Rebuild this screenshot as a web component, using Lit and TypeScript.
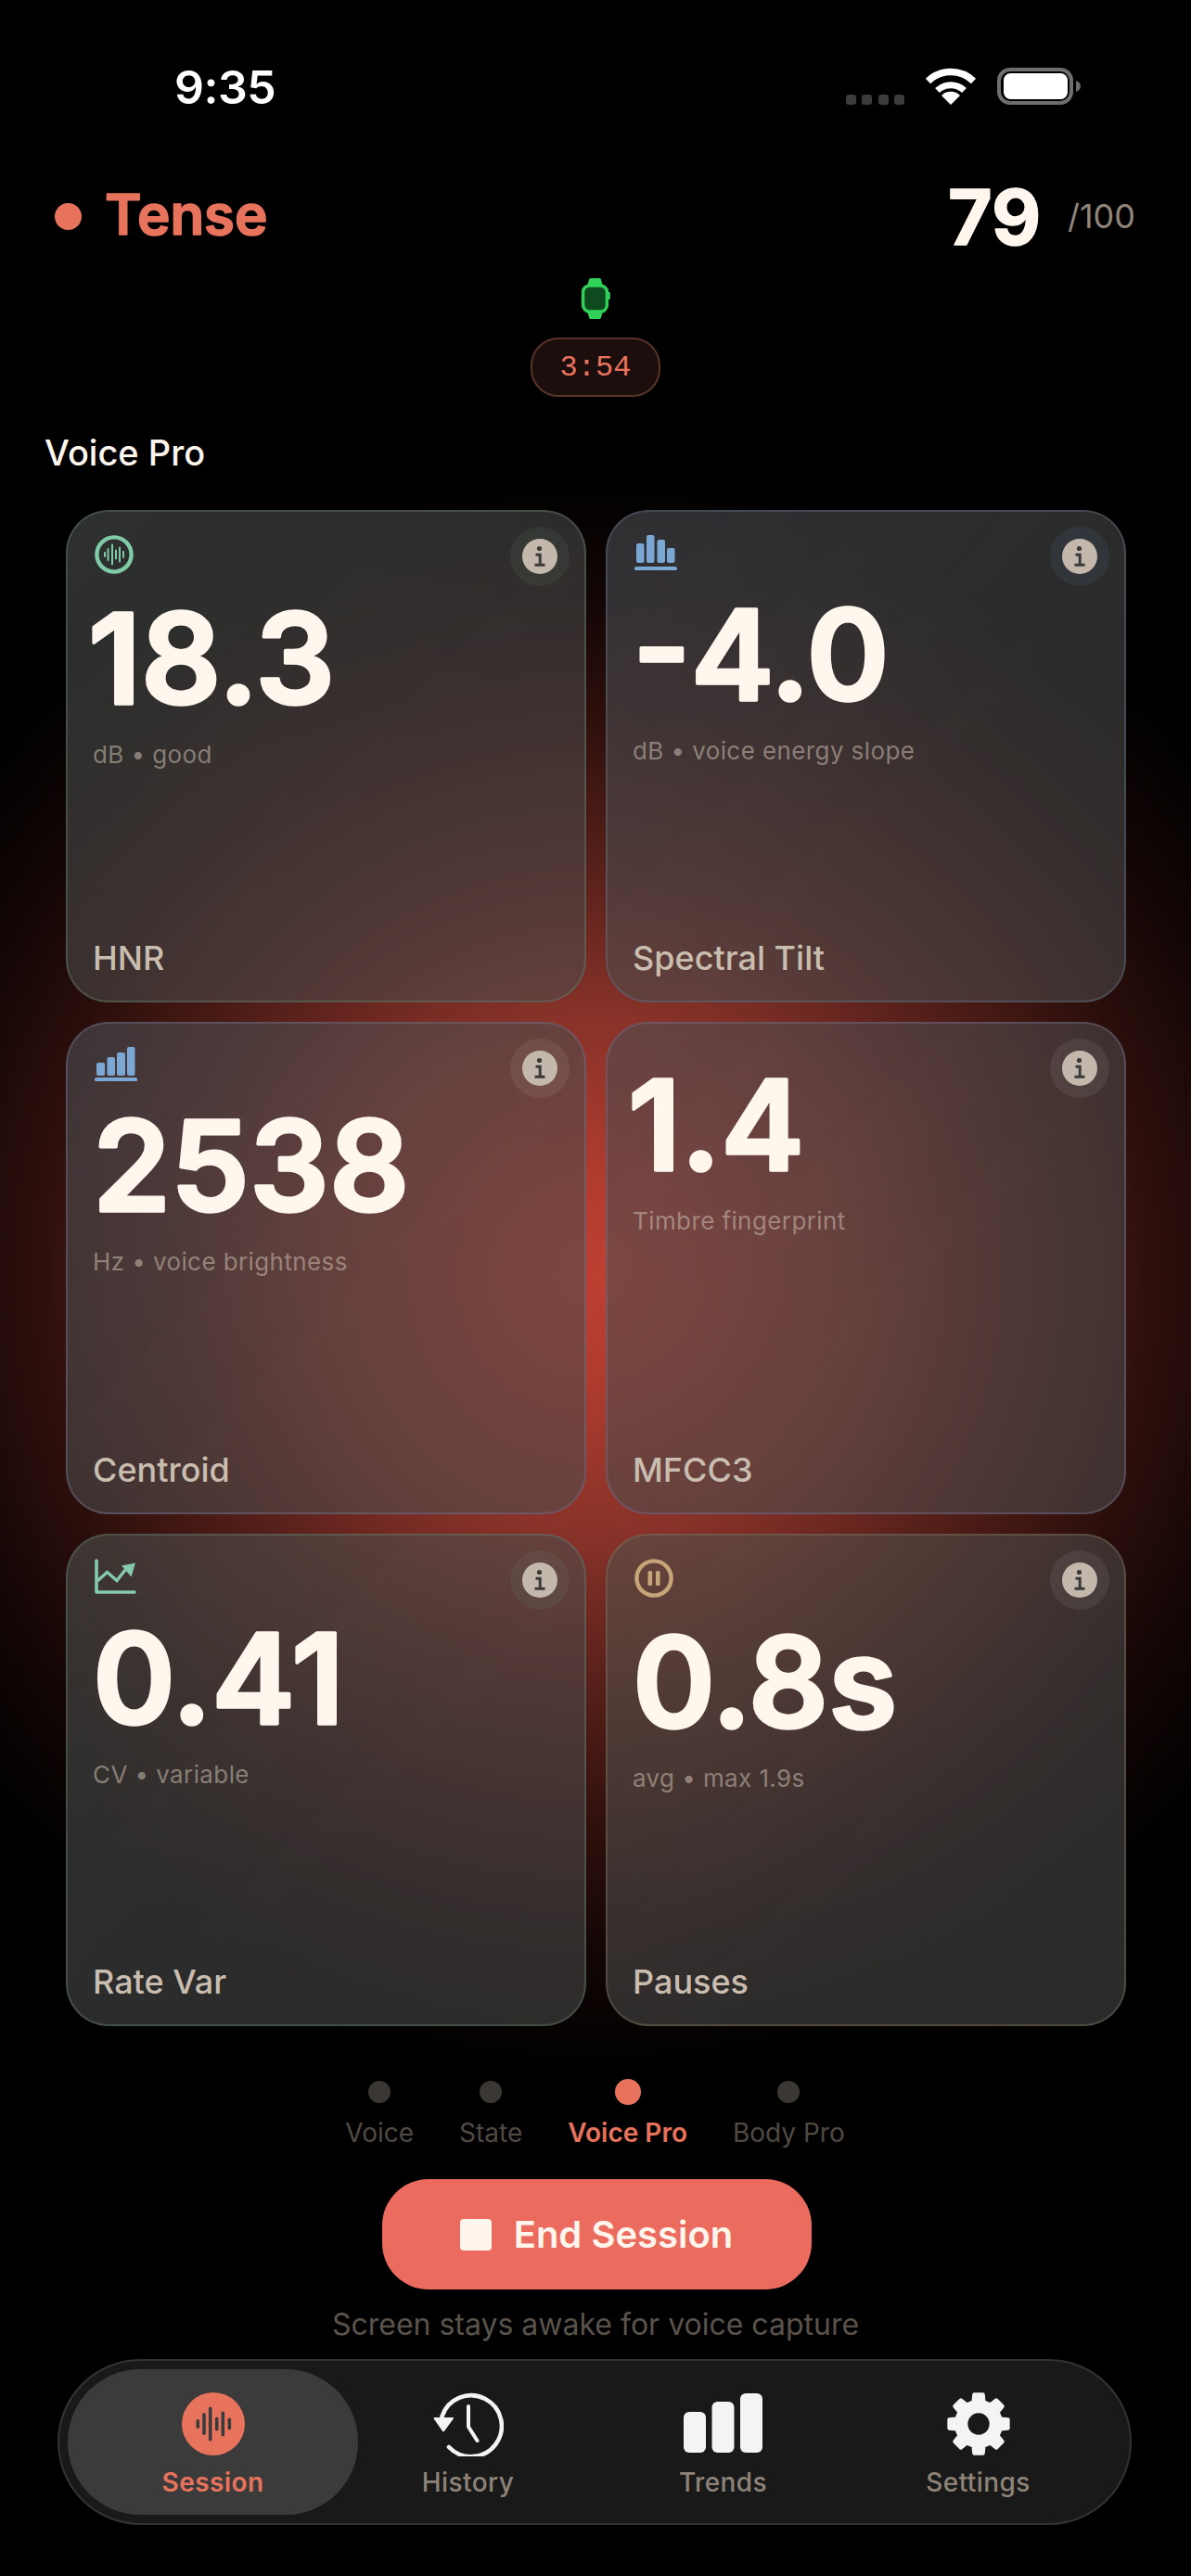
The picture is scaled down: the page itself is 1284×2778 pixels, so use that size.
import { LitElement, html, css, svg } from "lit";
import { customElement } from "lit/decorators.js";

const gearPath = (() => {
  const cx = 36, cy = 36, n = 8, R = 33, r = 25;
  const pts: string[] = [];
  for (let i = 0; i < n; i++) {
    const a = (i * 2 * Math.PI) / n - Math.PI / 2;
    const w1 = 0.235, w2 = 0.15;
    const p = (rad: number, ang: number) => `${(cx + rad * Math.cos(ang)).toFixed(2)} ${(cy + rad * Math.sin(ang)).toFixed(2)}`;
    pts.push(p(r, a - w1), p(R, a - w2), p(R, a + w2), p(r, a + w1));
  }
  return "M" + pts.join("L") + "Z";
})();

const infoIcon = html`<svg class="i" viewBox="0 0 38 38" aria-hidden="true">
  <circle class="i-bg" cx="19" cy="19" r="19"></circle>
  <circle class="i-fg-fill" cx="18.5" cy="10.5" r="2.6"></circle>
  <path class="i-fg" d="M14.5 17.2H19.2V28M13.5 28.2H24.5"></path>
</svg>`;

const bars = (items: [number, number][], w: number, cy: number) =>
  items.map(([x, h]) => svg`<rect x=${x - w / 2} y=${cy - h / 2} width=${w} height=${h} rx=${w / 2}></rect>`);

const icons: Record<string, unknown> = {
  wave: html`<svg class="ic c-green" width="42" height="42" viewBox="0 0 42 42">
    <circle class="ring" cx="21" cy="21" r="18.6"></circle>
    <g class="solid">${bars([[11, 6], [14.5, 14], [19, 23], [23, 11], [27, 17], [31, 8]], 2, 21)}</g>
  </svg>`,
  tilt: html`<svg class="ic c-blue" width="46" height="38" viewBox="0 0 46 38">
    <g class="solid">
      <rect x="2" y="9" width="8.5" height="21" rx="2"></rect><rect x="13" y="0" width="8.5" height="30" rx="2"></rect>
      <rect x="24.5" y="5" width="8.5" height="25" rx="2"></rect><rect x="35" y="14" width="8.5" height="16" rx="2"></rect>
      <rect x="0" y="34" width="46" height="4.2" rx="2"></rect>
    </g>
  </svg>`,
  centroid: html`<svg class="ic c-blue" width="46" height="37" viewBox="0 0 46 37">
    <g class="solid">
      <rect x="2" y="17" width="9" height="14" rx="2"></rect><rect x="13.5" y="11" width="8.5" height="20" rx="2"></rect>
      <rect x="24" y="6" width="9" height="25" rx="2"></rect><rect x="35" y="0" width="8.5" height="31" rx="2"></rect>
      <rect x="0" y="33" width="46" height="4.2" rx="2"></rect>
    </g>
  </svg>`,
  trend: html`<svg class="ic c-teal" width="46" height="38" viewBox="0 0 46 38">
    <path class="line" d="M2 2V36H43"></path>
    <path class="line thin" d="M4 23L13.5 14.5L24 23.5L33 12"></path>
    <path class="solid" d="M29 7.5L44 4.5L39.5 19.5Z"></path>
  </svg>`,
  pause: html`<svg class="ic c-gold" width="42" height="42" viewBox="0 0 42 42">
    <circle class="ring" cx="21" cy="21" r="18.6"></circle>
    <g class="solid"><rect x="14.5" y="13" width="4.6" height="16" rx="1.6"></rect><rect x="23" y="13" width="4.6" height="16" rx="1.6"></rect></g>
  </svg>`,
};

interface Card { icon?: string; value: string; sub: string; label: string; tint: string; x: number }
const cards: Card[] = [
  { icon: "wave", value: "18.3", sub: "dB • good", label: "HNR", tint: "t-green", x: -5 },
  { icon: "tilt", value: "-4.0", sub: "dB • voice energy slope", label: "Spectral Tilt", tint: "t-blue", x: 0 },
  { icon: "centroid", value: "2538", sub: "Hz • voice brightness", label: "Centroid", tint: "t-slate", x: 0 },
  { value: "1.4", sub: "Timbre fingerprint", label: "MFCC3", tint: "t-plum", x: -5 },
  { icon: "trend", value: "0.41", sub: "CV • variable", label: "Rate Var", tint: "t-green", x: 0 },
  { icon: "pause", value: "0.8s", sub: "avg • max 1.9s", label: "Pauses", tint: "t-gold", x: 0 },
];

const pages = [
  { t: "Voice" }, { t: "State" }, { t: "Voice Pro", on: true }, { t: "Body Pro" },
];

@customElement("app-root")
export class AppRoot extends LitElement {
  static styles = css`
    :host {
      display: block; width: 1284px; height: 2778px; overflow: hidden; color: #fff6ee;
      font-family: Inter, "Liberation Sans", sans-serif;
      background: #000 radial-gradient(circle 860px at 642px 1375px,
        #bd4031 0%, #b03c2e 12%, #873229 33%, #5a211b 50%, #2d0f0c 70%, #120605 85%, #000 100%) no-repeat;
    }
    .status { height: 188px; box-sizing: border-box; padding: 73px 119px 0 188px; display: flex; justify-content: space-between; align-items: flex-start; }
    .time { font-size: 50px; font-weight: 600; line-height: 42px; color: #fff; letter-spacing: -0.5px; }
    .sys { display: flex; align-items: flex-end; height: 40px; }
    .cell { display: flex; gap: 6.5px; margin-right: 22px; }
    .cell span { width: 11px; height: 11px; border-radius: 3px; background: #3c3c3c; }
    .wifi { margin-right: 22px; display: block; }
    .batt { display: block; }

    .head { height: 90px; padding: 0 60px 0 59px; display: flex; justify-content: space-between; align-items: center; }
    .state { display: flex; align-items: center; gap: 24px; }
    .dot { width: 29px; height: 29px; border-radius: 50%; background: #e8735c; }
    .rt { display: block; overflow: visible; }
    .rt text { stroke-linejoin: round; paint-order: stroke; font-family: Inter, sans-serif; }
    .tense text { font-size: 60px; font-weight: 600; fill: #e8735c; stroke: #e8735c; stroke-width: 1.6px; }
    .score { display: flex; align-items: center; gap: 27px; }
    .num text { font-size: 82px; font-weight: 700; fill: #fff6ee; stroke: #fff6ee; stroke-width: 1.6px; }
    .of { font-size: 36px; color: #8f857a; line-height: 40px; }

    .watch { display: flex; flex-direction: column; align-items: center; margin-top: 22px; }
    .watch svg { display: block; }
    .pill { margin-top: 20px; width: 140px; height: 64px; box-sizing: border-box; border-radius: 30px; border: 2px solid #5a3329; background: #1c0e0c;
      display: flex; align-items: center; justify-content: center; font-family: "Liberation Mono", monospace; font-size: 32px; color: #e8735c; }
    .title { margin: 38px 0 0 48px; font-size: 38px; font-weight: 500; line-height: 44px; color: #fff6ee; }

    .grid { margin: 40px 70px 0 71px; display: grid; grid-template-columns: 561px 561px; grid-auto-rows: 531px; gap: 21px; }
    .card { position: relative; box-sizing: border-box; border: 2px solid rgba(120,120,120,.32); border-radius: 46px; padding: 25px 27px 0;
      background-color: rgba(75,75,75,.57); display: flex; flex-direction: column; }
    .t-green { background-image: linear-gradient(135deg, rgba(70,110,85,.08), rgba(70,110,85,0) 60%); border-color: rgba(110,140,120,.35); }
    .t-blue { background-image: linear-gradient(135deg, rgba(70,90,125,.1), rgba(70,90,125,0) 60%); border-color: rgba(105,125,150,.35); }
    .t-slate { background-image: linear-gradient(135deg, rgba(70,90,125,.1), rgba(70,90,125,0) 60%); border-color: rgba(120,120,150,.4); }
    .t-plum { background-image: linear-gradient(135deg, rgba(90,70,110,.08), rgba(90,70,110,0) 60%); border-color: rgba(125,115,150,.4); }
    .t-gold { background-image: linear-gradient(135deg, rgba(125,100,60,.1), rgba(125,100,60,0) 60%); border-color: rgba(150,135,105,.32); }
    .ic { display: block; flex: none; margin-left: 2px; }
    .ring { fill: none; stroke: currentColor; stroke-width: 4.4px; }
    .solid { fill: currentColor; }
    .line { fill: none; stroke: currentColor; stroke-width: 3.6px; stroke-linecap: round; stroke-linejoin: round; }
    .thin { stroke-width: 3.4px; stroke-linejoin: miter; }
    .c-green { color: #7fcba8; } .c-blue { color: #7ba7d4; } .c-teal { color: #86c9b1; } .c-gold { color: #c7a578; }
    .value { margin-top: 41px; width: 480px; height: 100px; }
    .value.noicon { margin-top: 34px; }
    .value text { font-size: 135px; font-weight: 600; fill: #fff6ee; stroke: #fff6ee; stroke-width: 3.5px; }
    .sub { margin-top: 41px; font-size: 26px; line-height: 26px; color: rgba(200,186,172,.58); letter-spacing: 0.4px; }
    .label { position: absolute; left: 27px; bottom: 26px; font-size: 36px; line-height: 40px; font-weight: 500; color: #c9bdb0; }
    .info { position: absolute; top: 16px; right: 16px; width: 64px; height: 64px; border-radius: 50%; background: rgba(255,255,255,.07); display: flex; align-items: center; justify-content: center; }
    .t-green .info { background: rgba(120,170,140,.1); }
    .t-blue .info { background: rgba(110,150,200,.1); }
    .i { width: 38px; height: 38px; display: block; }
    .i-bg { fill: #c4b8ac; }
    .i-fg { fill: none; stroke: #3a3a38; stroke-width: 3px; }
    .i-fg-fill { fill: #3a3a38; }

    .pager { margin-top: 57px; display: flex; justify-content: center; gap: 49px; padding-right: 1px; }
    .pg { display: flex; flex-direction: column; align-items: center; }
    .pg i { display: block; width: 24px; height: 24px; border-radius: 50%; background: #3b3733; margin: 2px 0; }
    .pg.on i { width: 28px; height: 28px; background: #e8735c; margin: 0; }
    .pg span { margin-top: 12px; font-size: 28px; line-height: 36px; color: #504a44; }
    .pg.on span { color: #e8735c; font-weight: 600; }

    .end { margin: 32px auto 0; width: 463px; height: 119px; border-radius: 50px; background: #eb6c5e; display: flex; align-items: center; justify-content: center; gap: 24px; position: relative; left: 1px; }
    .end b { width: 34px; height: 34px; border-radius: 4px; background: #fff5ec; }
    .end span { font-size: 40px; font-weight: 600; color: #fff5ec; }
    .note { margin-top: 20px; text-align: center; font-size: 32px; line-height: 36px; color: #5a534c; }

    .tabs { margin: 19px 64px 0 62px; width: 1158px; height: 179px; box-sizing: border-box; border-radius: 90px; border: 2px solid #35332f; background: #191919; display: flex; padding: 9px; }
    .tab { width: 275px; flex: none; display: flex; flex-direction: column; align-items: center; height: 157px; }
    .tab.on { width: 313px; margin-right: -19px; border-radius: 78px; background: #3b3b3b; }
    .tab.next { }
    .tab svg { display: block; margin-top: 24px; height: 70px; }
    .tab span { margin-top: 10px; font-size: 28px; line-height: 36px; font-weight: 500; color: #8e8378; letter-spacing: 0.4px; }
    .tab.on span { color: #e8735c; font-weight: 600; }
  `;

  render() {
    return html`
      <div class="status">
        <div class="time">9:35</div>
        <div class="sys">
          <div class="cell"><span></span><span></span><span></span><span></span></div>
          <svg class="wifi" width="56" height="40" viewBox="0 0 56 40">
            <path fill="none" stroke="#fff" stroke-width="7.5" d="M3.5 14.5A35 35 0 0 1 52.5 14.5"></path>
            <path fill="none" stroke="#fff" stroke-width="7" d="M13.5 24.5A21 21 0 0 1 42.5 24.5"></path>
            <path fill="#fff" d="M28 40L18 30A14 14 0 0 1 38 30Z"></path>
          </svg>
          <svg class="batt" width="90" height="40" viewBox="0 0 90 40">
            <rect x="2" y="2" width="78" height="36" rx="12" fill="none" stroke="#6e6e6e" stroke-width="4"></rect>
            <rect x="7" y="6" width="69" height="28" rx="7.5" fill="#fff"></rect>
            <path d="M85 14C88 15 90 17 90 20S88 25 85 26Z" fill="#6e6e6e"></path>
          </svg>
        </div>
      </div>

      <div class="head">
        <div class="state">
          <div class="dot"></div>
          <svg class="rt tense" width="176" height="60"><text x="1" y="50">Tense</text></svg>
        </div>
        <div class="score">
          <svg class="rt num" width="104" height="70"><text x="2" y="66">79</text></svg>
          <div class="of">/100</div>
        </div>
      </div>

      <div class="watch">
        <svg width="32" height="44" viewBox="0 0 32 44">
          <path d="M7 9L9 1.5Q9.3 0 11 0H20Q21.7 0 22 1.5L24 9Z M7 35L9 42.5Q9.3 44 11 44H20Q21.7 44 22 42.5L24 35Z" fill="#30d158"></path>
          <rect x="2.6" y="8" width="25.8" height="28" rx="7" fill="#0f4a1f" stroke="#30d158" stroke-width="3.4"></rect>
          <rect x="29.4" y="15" width="2.4" height="8" rx="1" fill="#30d158"></rect>
        </svg>
        <div class="pill">3:54</div>
      </div>

      <div class="title">Voice Pro</div>

      <div class="grid">
        ${cards.map((c) => html`
          <div class="card ${c.tint}">
            ${c.icon ? icons[c.icon] : ""}
            <svg class="rt value ${c.icon ? "" : "noicon"}"><text x=${c.x} y="99">${c.value}</text></svg>
            <div class="sub">${c.sub}</div>
            <div class="label">${c.label}</div>
            <div class="info">${infoIcon}</div>
          </div>`)}
      </div>

      <div class="pager">
        ${pages.map((p) => html`<div class="pg ${p.on ? "on" : ""}"><i></i><span>${p.t}</span></div>`)}
      </div>

      <div class="end"><b></b><span>End Session</span></div>
      <div class="note">Screen stays awake for voice capture</div>

      <div class="tabs">
        <div class="tab on">
          <svg width="68" height="70" viewBox="0 0 68 70">
            <circle cx="34" cy="35" r="34" fill="#e8735c"></circle>
            <g fill="#3b3b3b">${bars([[17.3, 10], [24, 24], [30.7, 37], [37.7, 15], [44.3, 27], [51.3, 13]], 3.6, 35)}</g>
          </svg>
          <span>Session</span>
        </div>
        <div class="tab">
          <svg width="76" height="70" viewBox="0 0 76 70">
            <path fill="none" stroke="#f4f4f4" stroke-width="4.6" stroke-linecap="round" d="M9.5 27A33 33 0 1 1 17 60"></path>
            <path fill="#f4f4f4" stroke="#f4f4f4" stroke-width="2" stroke-linejoin="round" d="M1.5 29H21L11 42.5Z"></path>
            <path fill="none" stroke="#f4f4f4" stroke-width="4" stroke-linecap="round" stroke-linejoin="round" d="M38 16V38L47.5 53"></path>
          </svg>
          <span>History</span>
        </div>
        <div class="tab">
          <svg width="86" height="70" viewBox="0 0 86 70">
            <rect x="0" y="22" width="24" height="44" rx="6" fill="#f4f4f4"></rect>
            <rect x="30.5" y="11" width="24" height="55" rx="6" fill="#f4f4f4"></rect>
            <rect x="61" y="2" width="24" height="64" rx="6" fill="#f4f4f4"></rect>
          </svg>
          <span>Trends</span>
        </div>
        <div class="tab">
          <svg width="72" height="70" viewBox="0 0 72 72">
            <path d=${gearPath + "M48 36A12 12 0 1 0 24 36A12 12 0 1 0 48 36Z"} fill="#f4f4f4" fill-rule="evenodd" stroke="#f4f4f4" stroke-width="4" stroke-linejoin="round"></path>
            <circle cx="36" cy="36" r="12" fill="#191919"></circle>
          </svg>
          <span>Settings</span>
        </div>
      </div>
    `;
  }
}
